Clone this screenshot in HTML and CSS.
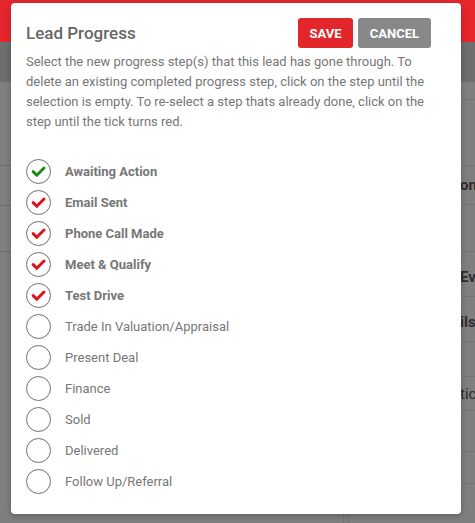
FILE: index.html
```html
<!DOCTYPE html>
<html>
<head>
<meta charset="utf-8">
<link rel="stylesheet" href="styles.css">
</head>
<body>
<div class="page">
  <div class="topbar"></div>
  <div class="subbar"></div>
  <div class="main">
    <div class="col-left">
      <div class="lrow h84"></div>
      <div class="lrow h40"></div>
      <div class="lrow h46"></div>
    </div>
    <div class="col-right">
      <div class="rcard">
        <div class="rrow h18"></div>
        <div class="rrow h66"></div>
        <div class="rrow h39"><span class="bg-label bold">on(</span></div>
        <div class="rrow h47"></div>
      </div>
      <div class="rcard">
        <div class="rrow h40"><span class="bg-label bold">Eve</span></div>
      </div>
      <div class="rcard">
        <div class="rrow h40"><span class="bg-label bold">ils</span></div>
        <div class="rrow h35"></div>
        <div class="rrow h34"><span class="bg-label">tic</span></div>
        <div class="rrow h41"></div>
        <div class="rrow h32"></div>
      </div>
    </div>
  </div>
</div>

<div class="modal">
  <div class="modal-head">
    <h1 class="title">Lead Progress</h1>
    <div class="actions">
      <button class="btn btn-save">SAVE</button>
      <button class="btn btn-cancel">CANCEL</button>
    </div>
  </div>
  <p class="desc">Select the new progress step(s) that this lead has gone through. To delete an existing completed progress step, click on the step until the selection is empty. To re-select a step thats already done, click on the step until the tick turns red.</p>
  <ul class="steps">
    <li class="step done"><span class="circle"><svg viewBox="0 0 25 25" class="tick green"><path d="M7.2 12.6 L10.8 16.2 L18 9"/></svg></span><span class="label">Awaiting Action</span></li>
    <li class="step done"><span class="circle"><svg viewBox="0 0 25 25" class="tick red"><path d="M7.2 12.6 L10.8 16.2 L18 9"/></svg></span><span class="label">Email Sent</span></li>
    <li class="step done"><span class="circle"><svg viewBox="0 0 25 25" class="tick red"><path d="M7.2 12.6 L10.8 16.2 L18 9"/></svg></span><span class="label">Phone Call Made</span></li>
    <li class="step done"><span class="circle"><svg viewBox="0 0 25 25" class="tick red"><path d="M7.2 12.6 L10.8 16.2 L18 9"/></svg></span><span class="label">Meet &amp; Qualify</span></li>
    <li class="step done"><span class="circle"><svg viewBox="0 0 25 25" class="tick red"><path d="M7.2 12.6 L10.8 16.2 L18 9"/></svg></span><span class="label">Test Drive</span></li>
    <li class="step"><span class="circle"></span><span class="label">Trade In Valuation/Appraisal</span></li>
    <li class="step"><span class="circle"></span><span class="label">Present Deal</span></li>
    <li class="step"><span class="circle"></span><span class="label">Finance</span></li>
    <li class="step"><span class="circle"></span><span class="label">Sold</span></li>
    <li class="step"><span class="circle"></span><span class="label">Delivered</span></li>
    <li class="step"><span class="circle"></span><span class="label">Follow Up/Referral</span></li>
  </ul>
</div>
</body>
</html>
```

FILE: styles.css
```css
* { box-sizing: border-box; }
html, body {
  margin: 0;
  padding: 0;
  width: 475px;
  height: 523px;
  overflow: hidden;
  background: #7f7f7f;
  font-family: Roboto, "Liberation Sans", sans-serif;
}
.page {
  width: 475px;
  height: 523px;
  display: flex;
  flex-direction: column;
}
.topbar { height: 42px; background: #e6262c; flex: none; }
.subbar { height: 40px; background: #6e6e6e; flex: none; }
.main {
  flex: 1;
  display: grid;
  grid-template-columns: 344px 1fr;
  column-gap: 4px;
}
.col-left { border-right: 1px solid #737373; }
.col-right { border-left: 1px solid #737373; display: flex; flex-direction: column; gap: 5px; }
.lrow { border-bottom: 1px solid #6c6c6c; }
.rrow {
  border-bottom: 1px solid #747474;
  display: flex;
  align-items: center;
  overflow: hidden;
  white-space: nowrap;
}
.h18 { height: 18px; }
.h32 { height: 32px; }
.h34 { height: 34px; }
.h35 { height: 35px; }
.h39 { height: 39px; }
.h40 { height: 40px; }
.h41 { height: 41px; }
.h46 { height: 46px; }
.h47 { height: 47px; }
.h66 { height: 66px; }
.h84 { height: 84px; }
.bg-label {
  padding-left: 111px;
  font-size: 15px;
  color: #2e2e2e;
}
.bg-label.bold { font-weight: 700; }

.modal {
  position: absolute;
  top: 3px;
  left: 11px;
  width: 450px;
  height: 511px;
  background: #fff;
  border-radius: 4px;
  box-shadow: 0 2px 6px rgba(0,0,0,0.25);
  padding: 15px 25px 17px 15px;
}
.modal-head {
  display: flex;
  align-items: center;
  justify-content: space-between;
  height: 30px;
}
.title {
  margin: 0;
  font-size: 17px;
  font-weight: 500;
  color: #666;
}
.actions {
  display: flex;
  gap: 5px;
  margin-right: 5px;
}
.btn {
  border: none;
  height: 30px;
  border-radius: 3px;
  color: #fff;
  font-family: Roboto, "Liberation Sans", sans-serif;
  font-size: 13px;
  font-weight: 700;
  padding: 0;
}
.btn-save { width: 55px; background: #e3262b; }
.btn-cancel { width: 73px; background: #888; }
.desc {
  margin: 4px 0 0 0;
  font-size: 13px;
  line-height: 20px;
  color: #777;
}
.steps {
  list-style: none;
  margin: 24px 0 0 0;
  padding: 0;
}
.step {
  height: 31px;
  display: flex;
  align-items: center;
}
.circle {
  width: 25px;
  height: 25px;
  border: 1px solid #6f6f6f;
  border-radius: 50%;
  flex: none;
  position: relative;
}
.tick {
  position: absolute;
  left: -1px;
  top: -1px;
  width: 25px;
  height: 25px;
}
.tick path {
  fill: none;
  stroke-width: 3;
  stroke-linecap: round;
  stroke-linejoin: miter;
}
.tick.green path { stroke: #1a8c1f; }
.tick.red path { stroke: #e20f1c; }
.label {
  margin-left: 14px;
  font-size: 13px;
  color: #777;
}
.step.done .label { font-weight: 700; }
```
